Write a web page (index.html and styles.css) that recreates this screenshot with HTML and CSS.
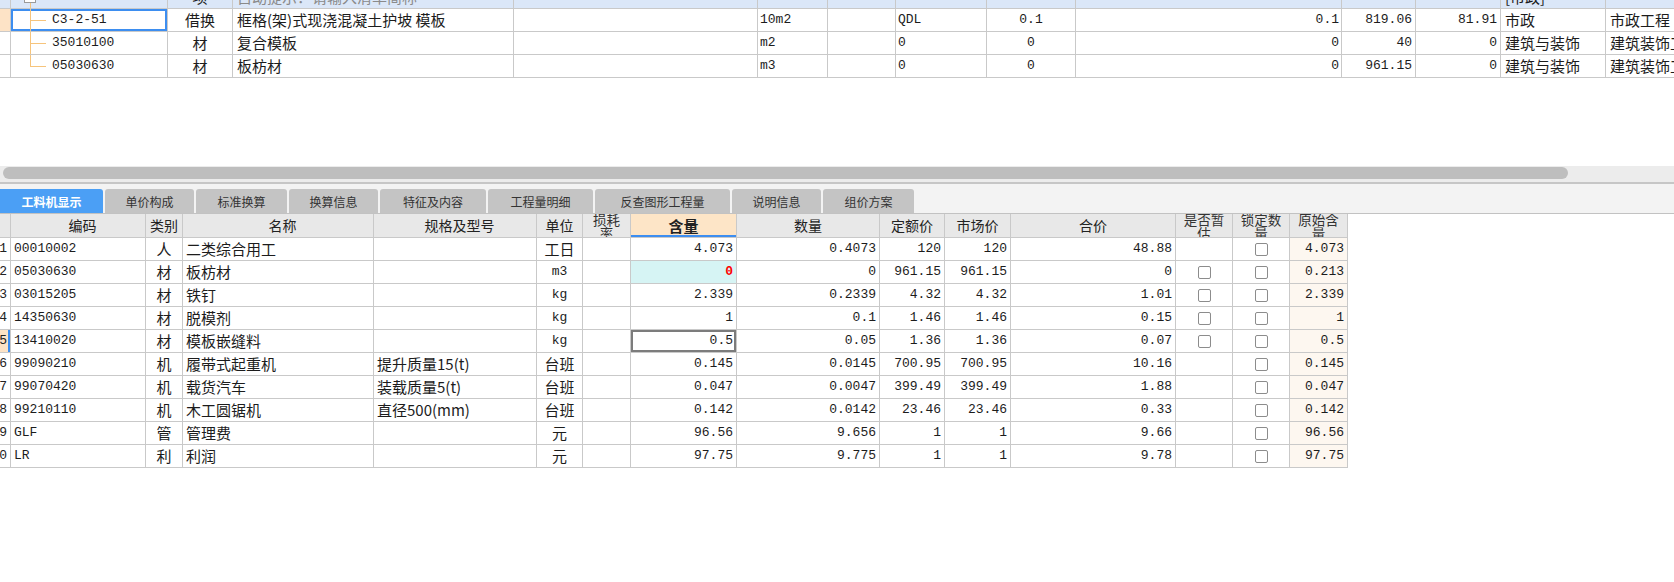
FILE: index.html
```html
<!DOCTYPE html>
<html lang="zh-CN">
<head>
<meta charset="utf-8">
<title>工料机显示</title>
<link rel="stylesheet" href="styles.css">
</head>
<body>
<div class="top-grid">
  <div class="partial">
    <div class="row tr row0">
      <div class="cell t0"></div>
      <div class="cell t1 tree tree-root"><span class="expander"></span></div>
      <div class="cell t2 c">项</div>
      <div class="cell t3 l hint">自动提示：请输入清单简称</div>
      <div class="cell t4"></div>
      <div class="cell t5"></div>
      <div class="cell t6"></div>
      <div class="cell t7 l m">1</div>
      <div class="cell t8"></div>
      <div class="cell t9 r m">1</div>
      <div class="cell t10 r m">81.91</div>
      <div class="cell t11 r m">81.91</div>
      <div class="cell t12 l">[市政]</div>
      <div class="cell t13"></div>
    </div>
  </div>
  <div class="row tr">
    <div class="cell t0 marker"></div>
    <div class="cell t1 tree branch selected"><span class="m">C3-2-51</span></div>
    <div class="cell t2 c">借换</div>
    <div class="cell t3 l">框格(架)式现浇混凝土护坡 模板</div>
    <div class="cell t4"></div>
    <div class="cell t5 l m">10m2</div>
    <div class="cell t6"></div>
    <div class="cell t7 l m">QDL</div>
    <div class="cell t8 c m">0.1</div>
    <div class="cell t9 r m">0.1</div>
    <div class="cell t10 r m">819.06</div>
    <div class="cell t11 r m">81.91</div>
    <div class="cell t12 l">市政</div>
    <div class="cell t13 l">市政工程</div>
  </div>
  <div class="row tr">
    <div class="cell t0"></div>
    <div class="cell t1 tree branch"><span class="m">35010100</span></div>
    <div class="cell t2 c">材</div>
    <div class="cell t3 l">复合模板</div>
    <div class="cell t4"></div>
    <div class="cell t5 l m">m2</div>
    <div class="cell t6"></div>
    <div class="cell t7 l m">0</div>
    <div class="cell t8 c m">0</div>
    <div class="cell t9 r m">0</div>
    <div class="cell t10 r m">40</div>
    <div class="cell t11 r m">0</div>
    <div class="cell t12 l">建筑与装饰</div>
    <div class="cell t13 l">建筑装饰工程</div>
  </div>
  <div class="row tr">
    <div class="cell t0"></div>
    <div class="cell t1 tree last"><span class="m">05030630</span></div>
    <div class="cell t2 c">材</div>
    <div class="cell t3 l">板枋材</div>
    <div class="cell t4"></div>
    <div class="cell t5 l m">m3</div>
    <div class="cell t6"></div>
    <div class="cell t7 l m">0</div>
    <div class="cell t8 c m">0</div>
    <div class="cell t9 r m">0</div>
    <div class="cell t10 r m">961.15</div>
    <div class="cell t11 r m">0</div>
    <div class="cell t12 l">建筑与装饰</div>
    <div class="cell t13 l">建筑装饰工程</div>
  </div>
</div>

<div class="hscroll"><div class="thumb"></div></div>

<div class="tabbar">
  <div class="tab active w1">工料机显示</div>
  <div class="tab w2">单价构成</div>
  <div class="tab w3">标准换算</div>
  <div class="tab w2">换算信息</div>
  <div class="tab w5">特征及内容</div>
  <div class="tab w6">工程量明细</div>
  <div class="tab w7">反查图形工程量</div>
  <div class="tab w2">说明信息</div>
  <div class="tab w3">组价方案</div>
</div>

<div class="grid">
  <div class="row head">
    <div class="cell g0"></div>
    <div class="cell g1 c shift">编码</div>
    <div class="cell g2 c">类别</div>
    <div class="cell g3 c shift">名称</div>
    <div class="cell g4 c shift">规格及型号</div>
    <div class="cell g5 c">单位</div>
    <div class="cell g6 c wrap">损耗率</div>
    <div class="cell g7 c active-col">含量</div>
    <div class="cell g8 c">数量</div>
    <div class="cell g9 c">定额价</div>
    <div class="cell g10 c">市场价</div>
    <div class="cell g11 c">合价</div>
    <div class="cell g12 c wrap">是否暂估</div>
    <div class="cell g13 c wrap">锁定数量</div>
    <div class="cell g14 c wrap">原始含量</div>
  </div>

  <div class="row">
    <div class="cell g0 num m">1</div>
    <div class="cell g1 l m">00010002</div>
    <div class="cell g2 c">人</div>
    <div class="cell g3 l">二类综合用工</div>
    <div class="cell g4 l"></div>
    <div class="cell g5 c">工日</div>
    <div class="cell g6"></div>
    <div class="cell g7 r m">4.073</div>
    <div class="cell g8 r m">0.4073</div>
    <div class="cell g9 r m">120</div>
    <div class="cell g10 r m">120</div>
    <div class="cell g11 r m">48.88</div>
    <div class="cell g12 c"></div>
    <div class="cell g13 c"><span class="cb"></span></div>
    <div class="cell g14 r m orig">4.073</div>
  </div>
  <div class="row">
    <div class="cell g0 num m">2</div>
    <div class="cell g1 l m">05030630</div>
    <div class="cell g2 c">材</div>
    <div class="cell g3 l">板枋材</div>
    <div class="cell g4 l"></div>
    <div class="cell g5 c m">m3</div>
    <div class="cell g6"></div>
    <div class="cell g7 r m changed">0</div>
    <div class="cell g8 r m">0</div>
    <div class="cell g9 r m">961.15</div>
    <div class="cell g10 r m">961.15</div>
    <div class="cell g11 r m">0</div>
    <div class="cell g12 c"><span class="cb"></span></div>
    <div class="cell g13 c"><span class="cb"></span></div>
    <div class="cell g14 r m orig">0.213</div>
  </div>
  <div class="row">
    <div class="cell g0 num m">3</div>
    <div class="cell g1 l m">03015205</div>
    <div class="cell g2 c">材</div>
    <div class="cell g3 l">铁钉</div>
    <div class="cell g4 l"></div>
    <div class="cell g5 c m">kg</div>
    <div class="cell g6"></div>
    <div class="cell g7 r m">2.339</div>
    <div class="cell g8 r m">0.2339</div>
    <div class="cell g9 r m">4.32</div>
    <div class="cell g10 r m">4.32</div>
    <div class="cell g11 r m">1.01</div>
    <div class="cell g12 c"><span class="cb"></span></div>
    <div class="cell g13 c"><span class="cb"></span></div>
    <div class="cell g14 r m orig">2.339</div>
  </div>
  <div class="row">
    <div class="cell g0 num m">4</div>
    <div class="cell g1 l m">14350630</div>
    <div class="cell g2 c">材</div>
    <div class="cell g3 l">脱模剂</div>
    <div class="cell g4 l"></div>
    <div class="cell g5 c m">kg</div>
    <div class="cell g6"></div>
    <div class="cell g7 r m">1</div>
    <div class="cell g8 r m">0.1</div>
    <div class="cell g9 r m">1.46</div>
    <div class="cell g10 r m">1.46</div>
    <div class="cell g11 r m">0.15</div>
    <div class="cell g12 c"><span class="cb"></span></div>
    <div class="cell g13 c"><span class="cb"></span></div>
    <div class="cell g14 r m orig">1</div>
  </div>
  <div class="row">
    <div class="cell g0 num m current">5</div>
    <div class="cell g1 l m">13410020</div>
    <div class="cell g2 c">材</div>
    <div class="cell g3 l">模板嵌缝料</div>
    <div class="cell g4 l"></div>
    <div class="cell g5 c m">kg</div>
    <div class="cell g6"></div>
    <div class="cell g7 r m focus">0.5</div>
    <div class="cell g8 r m">0.05</div>
    <div class="cell g9 r m">1.36</div>
    <div class="cell g10 r m">1.36</div>
    <div class="cell g11 r m">0.07</div>
    <div class="cell g12 c"><span class="cb"></span></div>
    <div class="cell g13 c"><span class="cb"></span></div>
    <div class="cell g14 r m orig">0.5</div>
  </div>
  <div class="row">
    <div class="cell g0 num m">6</div>
    <div class="cell g1 l m">99090210</div>
    <div class="cell g2 c">机</div>
    <div class="cell g3 l">履带式起重机</div>
    <div class="cell g4 l">提升质量15(t)</div>
    <div class="cell g5 c">台班</div>
    <div class="cell g6"></div>
    <div class="cell g7 r m">0.145</div>
    <div class="cell g8 r m">0.0145</div>
    <div class="cell g9 r m">700.95</div>
    <div class="cell g10 r m">700.95</div>
    <div class="cell g11 r m">10.16</div>
    <div class="cell g12 c"></div>
    <div class="cell g13 c"><span class="cb"></span></div>
    <div class="cell g14 r m orig">0.145</div>
  </div>
  <div class="row">
    <div class="cell g0 num m">7</div>
    <div class="cell g1 l m">99070420</div>
    <div class="cell g2 c">机</div>
    <div class="cell g3 l">载货汽车</div>
    <div class="cell g4 l">装载质量5(t)</div>
    <div class="cell g5 c">台班</div>
    <div class="cell g6"></div>
    <div class="cell g7 r m">0.047</div>
    <div class="cell g8 r m">0.0047</div>
    <div class="cell g9 r m">399.49</div>
    <div class="cell g10 r m">399.49</div>
    <div class="cell g11 r m">1.88</div>
    <div class="cell g12 c"></div>
    <div class="cell g13 c"><span class="cb"></span></div>
    <div class="cell g14 r m orig">0.047</div>
  </div>
  <div class="row">
    <div class="cell g0 num m">8</div>
    <div class="cell g1 l m">99210110</div>
    <div class="cell g2 c">机</div>
    <div class="cell g3 l">木工圆锯机</div>
    <div class="cell g4 l">直径500(mm)</div>
    <div class="cell g5 c">台班</div>
    <div class="cell g6"></div>
    <div class="cell g7 r m">0.142</div>
    <div class="cell g8 r m">0.0142</div>
    <div class="cell g9 r m">23.46</div>
    <div class="cell g10 r m">23.46</div>
    <div class="cell g11 r m">0.33</div>
    <div class="cell g12 c"></div>
    <div class="cell g13 c"><span class="cb"></span></div>
    <div class="cell g14 r m orig">0.142</div>
  </div>
  <div class="row">
    <div class="cell g0 num m">9</div>
    <div class="cell g1 l m">GLF</div>
    <div class="cell g2 c">管</div>
    <div class="cell g3 l">管理费</div>
    <div class="cell g4 l"></div>
    <div class="cell g5 c">元</div>
    <div class="cell g6"></div>
    <div class="cell g7 r m">96.56</div>
    <div class="cell g8 r m">9.656</div>
    <div class="cell g9 r m">1</div>
    <div class="cell g10 r m">1</div>
    <div class="cell g11 r m">9.66</div>
    <div class="cell g12 c"></div>
    <div class="cell g13 c"><span class="cb"></span></div>
    <div class="cell g14 r m orig">96.56</div>
  </div>
  <div class="row">
    <div class="cell g0 num m">10</div>
    <div class="cell g1 l m">LR</div>
    <div class="cell g2 c">利</div>
    <div class="cell g3 l">利润</div>
    <div class="cell g4 l"></div>
    <div class="cell g5 c">元</div>
    <div class="cell g6"></div>
    <div class="cell g7 r m">97.75</div>
    <div class="cell g8 r m">9.775</div>
    <div class="cell g9 r m">1</div>
    <div class="cell g10 r m">1</div>
    <div class="cell g11 r m">9.78</div>
    <div class="cell g12 c"></div>
    <div class="cell g13 c"><span class="cb"></span></div>
    <div class="cell g14 r m orig">97.75</div>
  </div>
</div>
</body>
</html>
```

FILE: styles.css
```css
html, body {
  margin: 0;
  padding: 0;
  background: #ffffff;
}
body {
  width: 1674px;
  height: 582px;
  overflow: hidden;
  font-family: "Noto Sans CJK SC", "Noto Sans", sans-serif;
  font-size: 15px;
  color: #1c1c1c;
}

/* ---------- generic grid rows ---------- */
.row {
  display: flex;
  height: 23px;
  box-sizing: border-box;
  border-bottom: 1px solid #c9c9c9;
}
.cell {
  flex: none;
  box-sizing: border-box;
  height: 100%;
  border-right: 1px solid #c9c9c9;
  display: flex;
  align-items: center;
  overflow: hidden;
  white-space: nowrap;
  line-height: 20px;
  position: relative;
}
.l { justify-content: flex-start; padding-left: 3px; }
.c { justify-content: center; }
.r { justify-content: flex-end; padding-right: 3px; }
.m {
  font-family: "Liberation Mono", "DejaVu Sans Mono", monospace;
  font-size: 13px;
}

/* ---------- top grid ---------- */
.top-grid {
  width: 1674px;
  overflow: hidden;
}
.top-grid .row { width: 1726px; }
.partial {
  height: 9px;
  overflow: hidden;
}
.row0 {
  margin-top: -14px;
  background: #dbe7f8;
}
.hint { color: #8a8a8a; }

.t0 { width: 11px; }
.t1 { width: 157px; padding-left: 41px; }
.t2 { width: 65px; }
.t3 { width: 281px; padding-left: 4px; }
.t4 { width: 244px; }
.t5 { width: 70px; padding-left: 2px; }
.t6 { width: 68px; }
.t7 { width: 91px; padding-left: 2px; }
.t8 { width: 89px; }
.t9 { width: 266px; padding-right: 2px; }
.t10 { width: 74px; padding-right: 3px; }
.t11 { width: 85px; padding-right: 3px; }
.t12 { width: 105px; padding-left: 4px; }
.t13 { width: 120px; padding-left: 4px; border-right: none; }

.marker { background: #fde3c6; }

/* tree guide lines */
.tree::before {
  content: "";
  position: absolute;
  left: 19px;
  top: 0;
  width: 1px;
  height: 100%;
  background: #f6c47c;
}
.tree.last::before { height: 50%; }
.tree.branch::after,
.tree.last::after {
  content: "";
  position: absolute;
  left: 19px;
  top: 50%;
  width: 16px;
  height: 1px;
  background: #f6c47c;
}
.tree-root::before { top: 17px; height: 6px; }
.expander {
  position: absolute;
  left: 13px;
  top: 5px;
  width: 12px;
  height: 12px;
  box-sizing: border-box;
  border: 1px solid #9a9a9a;
  background: #ffffff;
}
.selected::after { content: none; }
.selected {
  box-shadow: inset 0 0 0 2px #3d8ef0;
}
.selected .m { position: relative; }
.selected > .m::before {
  content: "";
  position: absolute;
  left: -22px;
  top: 50%;
  width: 16px;
  height: 1px;
  background: #f6c47c;
}

/* ---------- horizontal scrollbar ---------- */
.hscroll {
  margin-top: 88px;
  height: 15px;
  background: #ececec;
  border-bottom: 2px solid #c6c6c6;
  padding-top: 1px;
  box-sizing: content-box;
}
.thumb {
  margin-left: 3px;
  width: 1565px;
  height: 12px;
  border-radius: 6px;
  background: #bebebe;
}

/* ---------- tab bar ---------- */
.tabbar {
  display: flex;
  align-items: flex-end;
  gap: 2px;
  height: 30px;
  box-sizing: border-box;
  background: #f3f3f3;
  border-bottom: 1px solid #c2c2c2;
}
.tab {
  height: 24px;
  box-sizing: border-box;
  display: flex;
  align-items: center;
  justify-content: center;
  background: #c4c4c4;
  color: #333333;
  font-size: 12px;
  border-radius: 3px 3px 0 0;
}
.tab.active {
  background: #4b9ff5;
  color: #ffffff;
  font-weight: 700;
  border-radius: 0 3px 0 0;
}
.w1 { width: 103px; }
.w2 { width: 89px; }
.w3 { width: 91px; }
.w5 { width: 106px; }
.w6 { width: 105px; }
.w7 { width: 135px; }

/* ---------- lower grid ---------- */
.grid { width: 1348px; }
.head {
  height: 24px;
  background: #e8e8e8;
  font-size: 14px;
  color: #222222;
}
.head .cell { line-height: 15px; }
.head .shift { padding-left: 9px; }
.head .wrap {
  white-space: normal;
  word-break: break-all;
  text-align: center;
  padding: 0 6px;
  font-size: 13.5px;
  line-height: 14px;
  color: #333333;
}
.head .g6.wrap { padding: 0 5px; }
.active-col {
  background: #fde5c7;
  font-weight: 700;
  font-size: 15px;
  box-shadow: inset 0 -2px 0 #3d8ef0;
}

.g0 { width: 11px; }
.g1 { width: 135px; }
.g2 { width: 37px; }
.g3 { width: 191px; }
.g4 { width: 163px; }
.g5 { width: 46px; }
.g6 { width: 48px; }
.g7 { width: 106px; }
.g8 { width: 143px; }
.g9 { width: 65px; }
.g10 { width: 66px; }
.g11 { width: 165px; }
.g12 { width: 57px; }
.g13 { width: 57px; }
.g14 { width: 58px; }

.num {
  justify-content: flex-end;
  padding-right: 3px;
  color: #222222;
}
.current {
  background: #fde3c6;
  box-shadow: inset -2px 0 0 #3d8ef0;
}
.changed {
  background: #d6f4f4;
  color: #ff0000;
  font-weight: 700;
}
.focus {
  box-shadow: inset 0 0 0 2px #7c7c7c;
}
.orig { background: #fdf7f0; }

.cb {
  display: block;
  width: 13px;
  height: 13px;
  box-sizing: border-box;
  border: 1px solid #8c8c8c;
  border-radius: 2px;
  background: #ffffff;
}
```
